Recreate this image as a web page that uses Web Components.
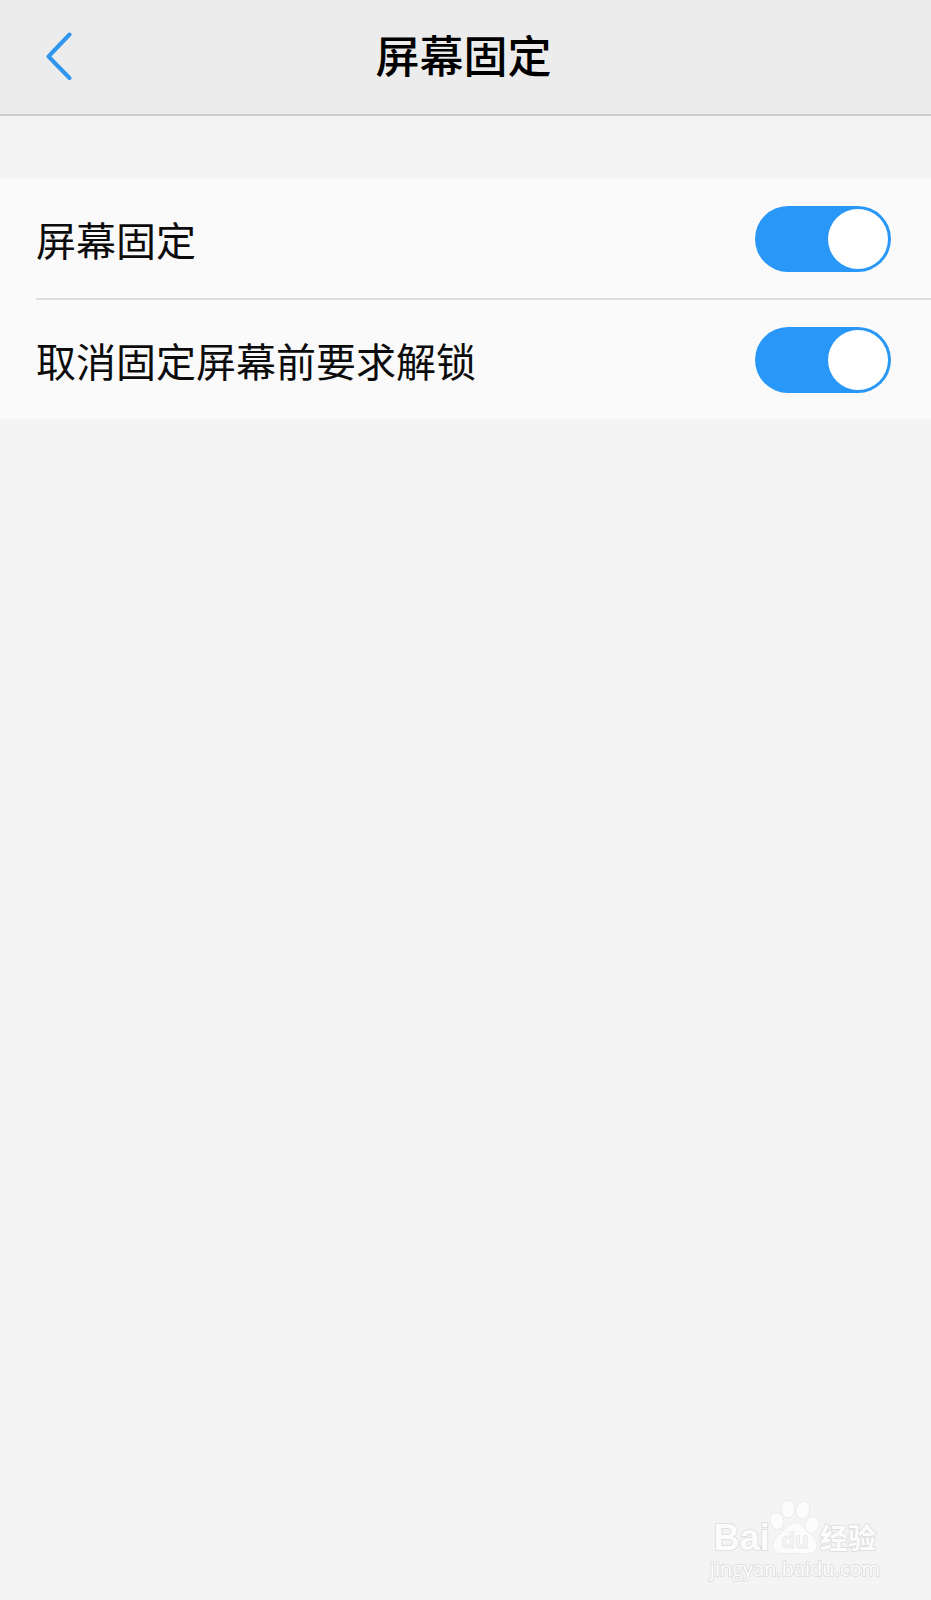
<!DOCTYPE html>
<html lang="zh-CN">
<head>
<meta charset="utf-8">
<meta name="viewport" content="width=device-width, initial-scale=1">
<title>屏幕固定</title>
<style>
    body {
        margin: 0;
        min-height: 100vh;
        background-color: #f4f4f4;
        color: #0c0c0c;
        font-family: "Noto Sans CJK SC", sans-serif;
    }
</style>
</head>
<body>
<settings-header>屏幕固定</settings-header>
<main>
    <settings-list>
        <settings-switch checked>屏幕固定</settings-switch>
        <settings-switch checked>取消固定屏幕前要求解锁</settings-switch>
    </settings-list>
</main>
<page-watermark></page-watermark>

<script>
class SettingsHeader extends HTMLElement {
    constructor() {
        super();
        this.attachShadow({mode: 'open'});
        this.shadowRoot.innerHTML = `
            <style>
                :host {
                    display: block;
                }
                header {
                    display: grid;
                    grid-template-columns: 76px 1fr 80px;
                    align-items: center;
                    height: 114px;
                    border-bottom: 2px solid #cdcdcd;
                    background-color: #ececec;
                }
                button {
                    display: flex;
                    align-items: center;
                    justify-content: flex-end;
                    height: 100%;
                    padding: 0;
                    border: 0;
                    background: none;
                    color: #3096ee;
                    cursor: pointer;
                }
                h1 {
                    margin: 0;
                    padding-bottom: 6px;
                    font-size: 44px;
                    font-weight: 500;
                    line-height: 64px;
                    text-align: center;
                    color: #000;
                }
            </style>
            <header>
                <button type="button" aria-label="返回">
                    <svg width="32" height="50" viewBox="0 0 32 50" fill="none" stroke="currentColor" stroke-width="4" stroke-linecap="round" stroke-linejoin="round">
                        <path d="M25.500 2.500L4.500 24.500L25.500 46"/>
                    </svg>
                </button>
                <h1><slot></slot></h1>
            </header>
        `;
    }
}

class SettingsList extends HTMLElement {
    constructor() {
        super();
        this.attachShadow({mode: 'open'});
        this.shadowRoot.innerHTML = `
            <style>
                :host {
                    display: flex;
                    flex-direction: column;
                    margin-top: 63px;
                    background-color: #fafafa;
                }
                ::slotted(:not(:last-child)) {
                    --divider: 2px solid #dedede;
                }
            </style>
            <slot></slot>
        `;
    }
}

class SettingsSwitch extends HTMLElement {
    constructor() {
        super();
        this.attachShadow({mode: 'open'});
        this.shadowRoot.innerHTML = `
            <style>
                :host {
                    display: block;
                    padding-left: 36px;
                }
                .row {
                    display: flex;
                    align-items: center;
                    justify-content: space-between;
                    gap: 24px;
                    min-height: 119px;
                    padding-right: 40px;
                    border-bottom: var(--divider, none);
                }
                label {
                    flex: 1;
                    font-size: 40px;
                    line-height: 60px;
                }
                input {
                    appearance: none;
                    flex: none;
                    display: flex;
                    align-items: center;
                    width: 136px;
                    height: 66px;
                    margin: 0;
                    padding: 3px;
                    box-sizing: border-box;
                    border-radius: 33px;
                    background-color: #c8c8c8;
                    cursor: pointer;
                }
                input::before {
                    content: "";
                    width: 60px;
                    height: 60px;
                    border-radius: 50%;
                    background-color: #fff;
                }
                input:checked {
                    justify-content: flex-end;
                    background-color: #2897f8;
                }
            </style>
            <div class="row">
                <label for="toggle"><slot></slot></label>
                <input id="toggle" type="checkbox" role="switch">
            </div>
        `;
        this.input = this.shadowRoot.getElementById('toggle');
    }

    connectedCallback() {
        this.input.checked = this.hasAttribute('checked');
    }
}

class PageWatermark extends HTMLElement {
    constructor() {
        super();
        this.attachShadow({mode: 'open'});
        this.shadowRoot.innerHTML = `
            <style>
                :host {
                    position: fixed;
                    right: 51px;
                    bottom: 19px;
                    color: #fcfcfc;
                    -webkit-text-stroke: 2px #e0e0e0;
                    paint-order: stroke fill;
                    pointer-events: none;
                }
                .brand {
                    display: flex;
                    align-items: flex-end;
                    padding: 0 0 2px 4px;
                }
                .bai {
                    font: bold 36px/34px "Liberation Sans", Arial, sans-serif;
                }
                .name {
                    font-size: 28px;
                    font-weight: 700;
                    line-height: 36px;
                }
                svg {
                    flex: none;
                    fill: #fcfcfc;
                    stroke: #e0e0e0;
                }
                svg text {
                    font: bold 22px "Liberation Sans", Arial, sans-serif;
                    fill: #f4f4f4;
                }
                .site {
                    font: 20px/24px "Open Sans", sans-serif;
                }
            </style>
            <div class="brand">
                <span class="bai">Bai</span>
                <svg width="50" height="60" viewBox="0 0 50 60">
                    <ellipse cx="7" cy="26" rx="6.500" ry="8.500" transform="rotate(-12 7 26)"/>
                    <ellipse cx="18" cy="14" rx="6.500" ry="8.500"/>
                    <ellipse cx="33" cy="15" rx="6.500" ry="8.500" transform="rotate(14 33 15)"/>
                    <ellipse cx="42" cy="30" rx="6.500" ry="8" transform="rotate(20 42 30)"/>
                    <path d="M25 28C18 28 16 34 10 39C4 44 2 49 4 53C7 61 17 58 25 58C33 58 42 61 46 54C48 49 46 43 40 39C34 34 32 28 25 28Z"/>
                    <text x="25" y="53" text-anchor="middle">du</text>
                </svg>
                <span class="name">经验</span>
            </div>
            <div class="site">jingyan.baidu.com</div>
        `;
    }
}

customElements.define("settings-header", SettingsHeader);
customElements.define("settings-list", SettingsList);
customElements.define("settings-switch", SettingsSwitch);
customElements.define("page-watermark", PageWatermark);
</script>
</body>
</html>
